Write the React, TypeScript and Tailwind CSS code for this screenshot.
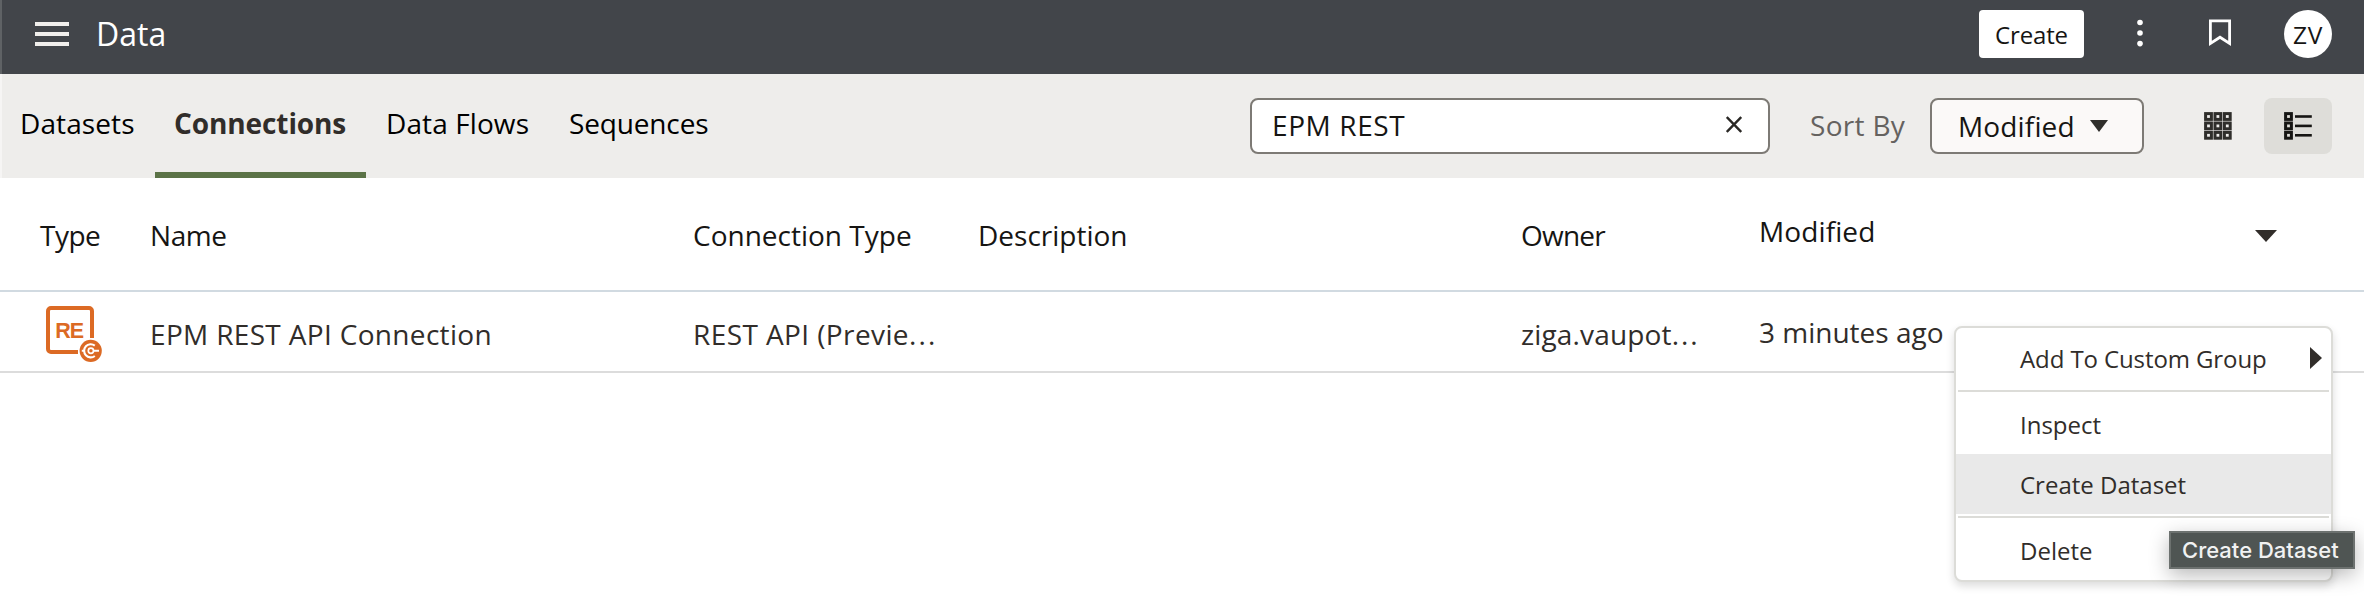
import React from "react";

const gridSteps = [0, 9.4, 18.8];

function GridIcon() {
  return (
    <svg width="28" height="28" viewBox="0 0 28 28" fill="none" stroke="#2f2e2b" strokeWidth="3">
      {gridSteps.map((y) =>
        gridSteps.map((x) => <rect key={`${x}-${y}`} x={x + 1.6} y={y + 1.6} width="5.8" height="5.8" />)
      )}
    </svg>
  );
}

function ListIcon() {
  return (
    <svg width="28" height="28" viewBox="0 0 28 28" fill="none" stroke="#161513">
      {gridSteps.map((y) => (
        <g key={y}>
          <rect x="1.6" y={y + 1.6} width="5.8" height="5.8" strokeWidth="3" />
          <path d={`M11 ${y + 4.5}H27.8`} strokeWidth="2.6" />
        </g>
      ))}
    </svg>
  );
}

function ConnectionIcon() {
  return (
    <svg width="58" height="58" viewBox="0 0 58 58" fill="none">
      <path d="M32 46H5a3 3 0 0 1-3-3V5a3 3 0 0 1 3-3h38a3 3 0 0 1 3 3v27" stroke="#dc6a24" strokeWidth="4" />
      <text x="9.2" y="32.3" fontFamily="Liberation Sans, sans-serif" fontWeight="700" fontSize="21.5" textLength="29" fill="#dc6a24">
        RE
      </text>
      <circle cx="44.7" cy="44.8" r="11.1" fill="#dc6a24" />
      <path d="M48.8 50A6.6 6.6 0 1 1 48.8 39.6" stroke="#fff" strokeWidth="2.1" />
      <path d="M35.8 44.8h2.6M47 44.8h6" stroke="#fff" strokeWidth="2" />
      <circle cx="44.9" cy="44.8" r="2.6" fill="#dc6a24" stroke="#fff" strokeWidth="1.7" />
    </svg>
  );
}

function TopBar() {
  return (
    <header className="flex h-[74px] items-start border-l-2 border-[#5f6265] bg-[#42454a] pl-[33px] pr-8">
      <div className="mt-[22px] flex flex-col gap-[6.5px]">
        <div className="h-[3.5px] w-[34px] bg-[#f1efed]" />
        <div className="h-[3.5px] w-[34px] bg-[#f1efed]" />
        <div className="h-[3.5px] w-[34px] bg-[#f1efed]" />
      </div>
      <h1 className="ml-[27px] mt-[14px] text-[32px] leading-[40px] text-white">Data</h1>
      <button className="ml-auto mt-[10px] h-12 w-[105px] rounded-[4px] bg-white pt-px text-[24px] leading-[47px] tracking-[-0.15px] text-[#161513]">
        Create
      </button>
      <svg className="ml-[53px] mt-[19px]" width="6" height="28" viewBox="0 0 6 28" fill="#fff">
        <circle cx="3" cy="3.5" r="2.8" />
        <circle cx="3" cy="14" r="2.8" />
        <circle cx="3" cy="24.6" r="2.8" />
      </svg>
      <svg className="ml-[66px] mt-[19px]" width="22" height="28" viewBox="0 0 22 28" fill="none" stroke="#fff" strokeWidth="2.8">
        <path d="M1.4 1.8H20.6V24.4L11 18.2L1.4 24.4Z" />
      </svg>
      <div className="ml-[53px] mt-[10px] h-12 w-12 rounded-full bg-white pt-px text-center text-[24.5px] leading-[47px] tracking-[0.6px] text-[#161513]">
        ZV
      </div>
    </header>
  );
}

function Toolbar() {
  return (
    <div className="flex h-[104px] items-center border-l-2 border-[#f6f5f4] bg-[#eeedeb] pr-8 text-[28px] leading-[40px] text-black">
      <nav className="flex h-full">
        <div className="flex w-[153px] items-center border-b-[6px] border-transparent pl-[18px] tracking-[0.1px]">Datasets</div>
        <div className="flex w-[211px] items-center border-b-[6px] border-[#5b7347] pl-[19px] font-bold tracking-[-0.1px] text-[#312d2a]">
          Connections
        </div>
        <div className="flex w-[183px] items-center border-b-[6px] border-transparent pl-5 tracking-[0.1px]">Data Flows</div>
        <div className="flex items-center border-b-[6px] border-transparent pl-5 tracking-[-0.15px]">Sequences</div>
      </nav>
      <div className="ml-auto flex h-14 w-[520px] items-center justify-between rounded-[8px] border-2 border-[#7d7a75] bg-white pl-5 pr-[26px] text-[#161513]">
        <span className="-mt-[2px] tracking-[0.6px]">EPM REST</span>
        <svg className="-mt-[4px]" width="16" height="17" viewBox="0 0 16 17" stroke="#2a2825" strokeWidth="2.4">
          <path d="M.8 1L15.2 16M15.2 1L.8 16" />
        </svg>
      </div>
      <span className="-mt-[2px] ml-[40px] w-[120px] tracking-[0.3px] text-[#65625f]">Sort By</span>
      <div className="flex h-14 w-[214px] items-center rounded-[8px] border-2 border-[#7d7a75] bg-[#fbf9f8] pl-[26px] text-[#161513]">
        <span className="w-[132px] tracking-[0.15px]">Modified</span>
        <svg width="18" height="12" viewBox="0 0 18 12" fill="#2f2e2b">
          <path d="M0 0H18L9 12Z" />
        </svg>
      </div>
      <div className="ml-[40px] flex h-14 w-[68px] items-center justify-center">
        <GridIcon />
      </div>
      <div className="ml-[12px] flex h-14 w-[68px] items-center justify-center rounded-[8px] bg-[#deddd9]">
        <ListIcon />
      </div>
    </div>
  );
}

const columns = "grid grid-cols-[110px_543px_285px_543px_238px_1fr] items-center pl-[40px] text-[28px] leading-[40px]";

function ConnectionsTable() {
  return (
    <div>
      <div className={`${columns} h-[114px] border-b-2 border-[#d1dae1] pt-[2px] text-[#161513]`}>
        <span className="tracking-[-0.5px]">Type</span>
        <span className="tracking-[-0.4px]">Name</span>
        <span>Connection Type</span>
        <span>Description</span>
        <span className="tracking-[-0.8px]">Owner</span>
        <div className="flex items-center justify-between pr-[87px]">
          <span className="-mt-[8px] tracking-[0.1px]">Modified</span>
          <svg className="mt-[2px]" width="22" height="12" viewBox="0 0 22 12" fill="#312d2a">
            <path d="M0 0H22L11 12Z" />
          </svg>
        </div>
      </div>
      <div className={`${columns} h-[81px] border-b-2 border-[#dcdcdc] text-[#312d2a]`}>
        <div className="pl-[6px] pt-[6px]">
          <ConnectionIcon />
        </div>
        <span className="pt-[5px] tracking-[0.33px]">EPM REST API Connection</span>
        <span className="pt-[5px] tracking-[0.4px]">
          REST API (Previe<span className="tracking-[2.1px]">...</span>
        </span>
        <span />
        <span className="pt-[5px] tracking-[0.15px]">
          ziga.vaupot<span className="tracking-[1.9px]">...</span>
        </span>
        <span className="pt-[1px]">3 minutes ago</span>
      </div>
    </div>
  );
}

function ContextMenu() {
  return (
    <div className="absolute left-[1954px] top-[326px] w-[379px] rounded-[8px] border-2 border-[#dcdcd8] bg-white text-[24px] text-[#312d2a] shadow-[0_4px_8px_rgba(0,0,0,0.14)]">
      <div className="flex h-[60px] items-center justify-between pl-[64px] pr-[9px] leading-[34px] tracking-[-0.1px]">
        <span className="pt-px">Add To Custom Group</span>
        <svg width="12" height="22" viewBox="0 0 12 22" fill="#312d2a">
          <path d="M0 0L12 11L0 22Z" />
        </svg>
      </div>
      <div className="mx-[2px] my-[2px] h-[2px] bg-[#dcdcd8]" />
      <div className="flex h-[60px] items-center pl-[64px] pt-px">Inspect</div>
      <div className="flex h-[60px] items-center bg-[#e9e9e9] pl-[64px] pt-px">Create Dataset</div>
      <div className="mx-[2px] my-[2px] h-[2px] bg-[#dcdcd8]" />
      <div className="flex h-[60px] items-center pl-[64px] pt-px">Delete</div>
    </div>
  );
}

export default function App() {
  return (
    <div className="relative h-[598px] w-[2364px] overflow-hidden whitespace-nowrap bg-white font-['Open_Sans','Noto_Sans',sans-serif]">
      <TopBar />
      <Toolbar />
      <ConnectionsTable />
      <ContextMenu />
      <div className="absolute left-[2169px] top-[531px] flex h-[38px] w-[186px] items-center border-2 border-[#6c716f] bg-[#4f5553] pl-[11px] font-['Inter',sans-serif] text-[22px] font-medium leading-[34px] text-[#f1f2f2] shadow-[0_6px_20px_rgba(0,0,0,0.28)]">
        Create Dataset
      </div>
    </div>
  );
}
